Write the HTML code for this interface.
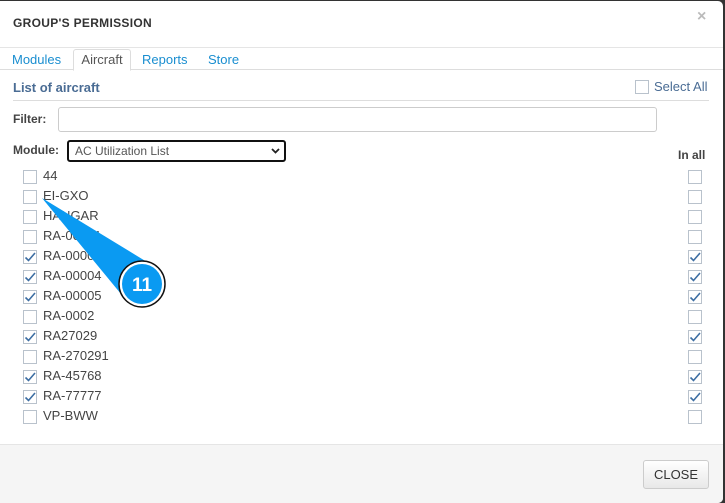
<!DOCTYPE html><html><head><style>
body{margin:0;width:725px;height:503px;background:#333;font-family:"Liberation Sans",sans-serif;position:relative;overflow:hidden}
.m{position:absolute;left:0;top:1px;width:723px;height:502px;background:#fff;border-radius:0 5px 5px 0}
.t{position:absolute;left:13px;top:15px;font-size:12px;font-weight:bold;color:#333;letter-spacing:.3px}
.x{position:absolute;left:697px;top:7px;font-size:16px;color:#bbb;font-weight:bold}
.hl{position:absolute;left:0;width:723px;height:1px;background:#e5e5e5}
.tab{position:absolute;top:51px;font-size:13px;color:#1a8ed0}
.at{position:absolute;left:73px;top:48px;width:56px;height:20px;border:1px solid #ddd;border-bottom:1px solid #fff;border-radius:3px 3px 0 0;background:#fff;color:#555;font-size:13px;text-align:center;line-height:20px}
.cb{position:absolute;width:12px;height:12px;border:1px solid #b9c2cc;background:#fff}
.lab{position:absolute;font-size:13px;color:#444}
.ck{position:absolute}
</style></head><body><div class="m">
<div class="t">GROUP'S PERMISSION</div><div class="x">×</div>
<div class="hl" style="top:46px"></div>
<div class="hl" style="top:68px;background:#ddd"></div>
<div class="tab" style="left:12px">Modules</div>
<div class="at">Aircraft</div>
<div class="tab" style="left:142px">Reports</div>
<div class="tab" style="left:208px">Store</div>
<div style="position:absolute;left:13px;top:79px;font-size:13px;font-weight:bold;color:#4a6c94">List of aircraft</div>
<div class="cb" style="left:635px;top:79px"></div>
<div style="position:absolute;left:654px;top:78px;font-size:13px;color:#4a6c94">Select All</div>
<div style="position:absolute;left:13px;top:99px;width:696px;height:1px;background:#ddd"></div>
<div style="position:absolute;left:13px;top:111px;font-size:12px;font-weight:bold;color:#444">Filter:</div>
<div style="position:absolute;left:58px;top:106px;width:597px;height:23px;border:1px solid #ccc;border-radius:3px"></div>
<div style="position:absolute;left:13px;top:142px;font-size:12px;font-weight:bold;color:#444">Module:</div>
<div style="position:absolute;left:67px;top:139px;height:18px;border:2px solid #111;border-radius:3px;font-size:12px;color:#555;line-height:18px;padding-left:6px;width:209px">AC Utilization List<svg style="position:absolute;right:4px;top:6px" width="9" height="6"><path d="M1 1L4.5 4.5L8 1" stroke="#222" stroke-width="1.8" fill="none"/></svg></div>
<div style="position:absolute;left:678px;top:147px;font-size:12px;font-weight:bold;color:#444">In all</div>
<div id="rows"></div>
<div class="hl" style="top:443px"></div>
<div style="position:absolute;left:0;top:444px;width:723px;height:58px;background:#f5f5f5;border-radius:0 0 5px 0"></div>
<div style="position:absolute;left:643px;top:459px;width:64px;height:27px;border:1px solid #ccc;border-radius:3px;background:linear-gradient(#fff,#e8e8e8);font-size:13px;color:#333;text-align:center;line-height:27px">CLOSE</div>
</div>
<svg style="position:absolute;left:0;top:0" width="725" height="503">
<polygon points="42,198 147,262 121,294" fill="#0a9af2"/>
<circle cx="142" cy="284" r="23" fill="#fff" stroke="#111" stroke-width="1.5"/>
<circle cx="142" cy="284" r="20" fill="#0a9af2"/>
<text x="142" y="291" text-anchor="middle" font-family="Liberation Sans" font-weight="bold" font-size="19" fill="#fff">11</text>
</svg>
<script>
var d=[["44",0,0],["EI-GXO",0,0],["HANGAR",0,0],["RA-00001",0,0],["RA-00003",1,1],["RA-00004",1,1],["RA-00005",1,1],["RA-0002",0,0],["RA27029",1,1],["RA-270291",0,0],["RA-45768",1,1],["RA-77777",1,1],["VP-BWW",0,0]],h="";
var ck='<svg width="14" height="14"><path d="M2.5 7.5L5.5 10.5L12 3" stroke="#3d6ea3" stroke-width="1.6" fill="none"/></svg>';
d.forEach(function(r,i){var y=169+i*20;
h+='<div class="cb" style="left:23px;top:'+y+'px"></div>';
if(r[1])h+='<div class="ck" style="left:23px;top:'+y+'px">'+ck+'</div>';
h+='<div class="lab" style="left:43px;top:'+(y-2)+'px">'+r[0]+'</div>';
h+='<div class="cb" style="left:688px;top:'+y+'px"></div>';
if(r[2])h+='<div class="ck" style="left:688px;top:'+y+'px">'+ck+'</div>';});
document.getElementById("rows").innerHTML=h;
</script>
</body></html>
